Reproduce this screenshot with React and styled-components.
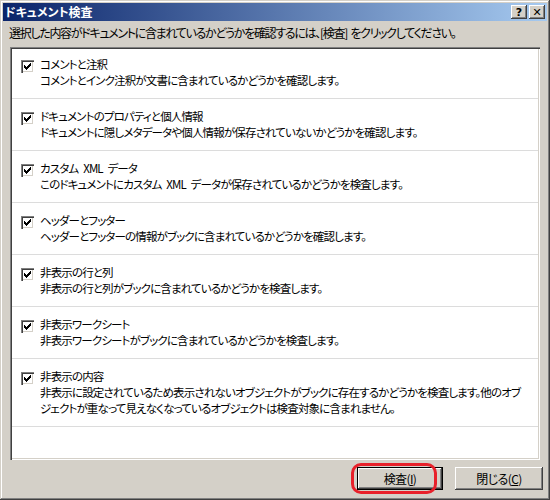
import styled, { createGlobalStyle } from 'styled-components';

const GlobalStyle = createGlobalStyle`
  html, body {
    margin: 0;
    padding: 0;
    background: #d4d0c8;
  }
  body {
    font-family: "Noto Sans CJK JP", "Noto Sans", sans-serif;
    font-size: 12px;
    font-feature-settings: "palt" 1;
    color: #000;
  }
`;

const Window = styled.div`
  position: relative;
  width: 550px;
  height: 500px;
  box-sizing: border-box;
  padding: 3px;
  background: #d4d0c8;
  box-shadow: inset -1px -1px #404040, inset 1px 1px #d4d0c8,
    inset -2px -2px #808080, inset 2px 2px #ffffff;
  display: flex;
  flex-direction: column;
`;

const TitleBar = styled.div`
  height: 18px;
  display: flex;
  align-items: center;
  padding: 0 2px 0 2px;
  background: linear-gradient(to right, #0a246a, #a6caf0);
`;

const Title = styled.div`
  flex: 1;
  color: #fff;
  font-weight: bold;
  font-size: 12px;
  line-height: 18px;
`;

const CaptionButton = styled.div`
  width: 16px;
  height: 14px;
  box-sizing: border-box;
  margin-left: ${(p) => (p.$gap ? '2px' : '0')};
  background: #d4d0c8;
  box-shadow: inset -1px -1px #404040, inset 1px 1px #ffffff,
    inset -2px -2px #808080;
  display: flex;
  align-items: center;
  justify-content: center;
  font-family: "DejaVu Sans", sans-serif;
  font-weight: bold;
  font-size: 11px;
  line-height: 1;
`;

const Instruction = styled.div`
  margin: 4px 0 0 6px;
  line-height: 16px;
  white-space: nowrap;
  letter-spacing: -1.3px;
  word-spacing: 2px;
`;

const Panel = styled.div`
  margin: 6px 7px 0 7px;
  height: 413px;
  box-sizing: border-box;
  background: #fff;
  box-shadow: inset 1px 1px #808080, inset 2px 2px #404040,
    inset -1px -1px #ffffff, inset -2px -2px #d4d0c8;
  padding: 2px;
  overflow: hidden;
`;

const Item = styled.div`
  display: flex;
  align-items: flex-start;
  gap: 6px;
  padding: 9px 0 10px 9px;
  border-bottom: 1px solid #dcdcdc;
  &:first-child {
    padding-top: 7px;
  }
`;

const CheckBox = styled.div`
  flex: none;
  width: 13px;
  height: 13px;
  margin-top: 4px;
  box-sizing: border-box;
  background: #fff;
  box-shadow: inset 1px 1px #808080, inset 2px 2px #404040,
    inset -1px -1px #ffffff, inset -2px -2px #d4d0c8;
  display: flex;
  align-items: center;
  justify-content: center;
`;

const ItemText = styled.div`
  font-size: 11.5px;
  line-height: 16px;
  white-space: nowrap;
  letter-spacing: -0.85px;
  word-spacing: 3px;
`;

const Footer = styled.div`
  display: flex;
  justify-content: flex-end;
  gap: 12px;
  margin-top: 7px;
  padding-right: 4px;
`;

const Button = styled.div`
  width: ${(p) => p.$w}px;
  height: 23px;
  box-sizing: border-box;
  display: flex;
  align-items: center;
  justify-content: center;
  background: #d4d0c8;
  box-shadow: ${(p) =>
    p.$default
      ? 'inset 0 0 0 1px #000, inset -2px -2px #404040, inset 2px 2px #ffffff, inset -3px -3px #808080'
      : 'inset -1px -1px #404040, inset 1px 1px #ffffff, inset -2px -2px #808080'};
  line-height: 16px;
  letter-spacing: -0.6px;
  u {
    text-decoration: underline;
  }
`;

const Highlight = styled.div`
  position: absolute;
  left: 351px;
  top: 463px;
  width: 86px;
  height: 31px;
  box-sizing: border-box;
  border: 3px solid #e8202a;
  border-radius: 10px;
  pointer-events: none;
`;

const Check = () => (
  <svg width="7" height="7" viewBox="0 0 7 7">
    <path
      d="M0 2h1v1h1v1h1v-1h1v-1h1v-1h1v-1h1v3h-1v1h-1v1h-1v1h-1v1h-1v-1h-1v-1h-1z"
      fill="#000"
    />
  </svg>
);

const items = [
  {
    title: 'コメントと注釈',
    desc: ['コメントとインク注釈が文書に含まれているかどうかを確認します。'],
  },
  {
    title: 'ドキュメントのプロパティと個人情報',
    desc: ['ドキュメントに隠しメタデータや個人情報が保存されていないかどうかを確認します。'],
  },
  {
    title: 'カスタム XML データ',
    desc: ['このドキュメントにカスタム XML データが保存されているかどうかを検査します。'],
  },
  {
    title: 'ヘッダーとフッター',
    desc: ['ヘッダーとフッターの情報がブックに含まれているかどうかを確認します。'],
  },
  {
    title: '非表示の行と列',
    desc: ['非表示の行と列がブックに含まれているかどうかを検査します。'],
  },
  {
    title: '非表示ワークシート',
    desc: ['非表示ワークシートがブックに含まれているかどうかを検査します。'],
  },
  {
    title: '非表示の内容',
    desc: [
      '非表示に設定されているため表示されないオブジェクトがブックに存在するかどうかを検査します。他のオブ',
      'ジェクトが重なって見えなくなっているオブジェクトは検査対象に含まれません。',
    ],
  },
];

export default function App() {
  return (
    <>
      <GlobalStyle />
      <Window>
        <TitleBar>
          <Title>ドキュメント検査</Title>
          <CaptionButton>?</CaptionButton>
          <CaptionButton $gap>✕</CaptionButton>
        </TitleBar>
        <Instruction>
          選択した内容がドキュメントに含まれているかどうかを確認するには、[検査] をクリックしてください。
        </Instruction>
        <Panel>
          {items.map((it) => (
            <Item key={it.title}>
              <CheckBox>
                <Check />
              </CheckBox>
              <ItemText>
                <div>{it.title}</div>
                {it.desc.map((d) => (
                  <div key={d}>{d}</div>
                ))}
              </ItemText>
            </Item>
          ))}
        </Panel>
        <Footer>
          <Button $w={86} $default>
            検査(<u>I</u>)
          </Button>
          <Button $w={88}>
            閉じる(<u>C</u>)
          </Button>
        </Footer>
        <Highlight />
      </Window>
    </>
  );
}
